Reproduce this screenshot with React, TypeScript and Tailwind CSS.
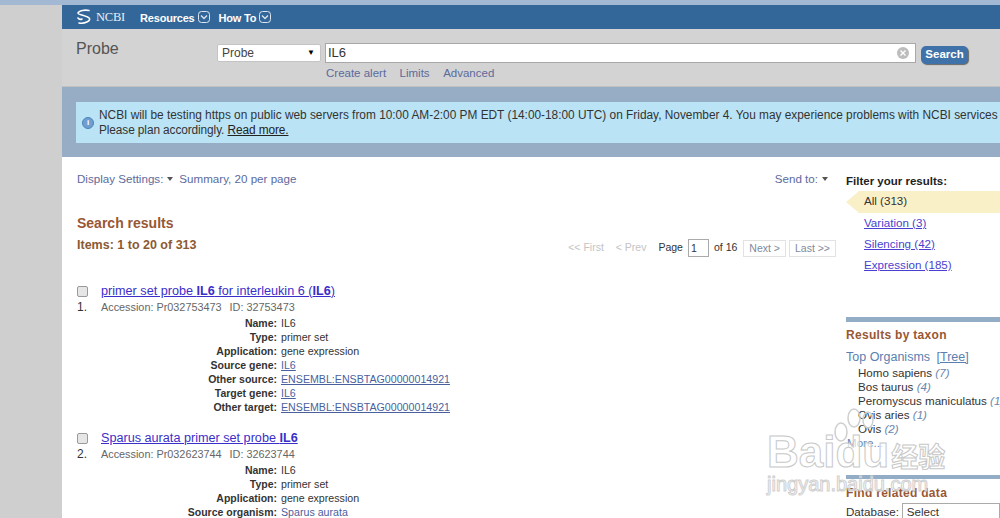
import React from 'react';

const firstRows = [
  { label: 'Name:', value: 'IL6' },
  { label: 'Type:', value: 'primer set' },
  { label: 'Application:', value: 'gene expression' },
  { label: 'Source gene:', value: 'IL6', link: true },
  { label: 'Other source:', value: 'ENSEMBL:ENSBTAG00000014921', link: true },
  { label: 'Target gene:', value: 'IL6', link: true },
  { label: 'Other target:', value: 'ENSEMBL:ENSBTAG00000014921', link: true },
];

const secondRows = [
  { label: 'Name:', value: 'IL6' },
  { label: 'Type:', value: 'primer set' },
  { label: 'Application:', value: 'gene expression' },
  { label: 'Source organism:', value: 'Sparus aurata', plainLink: true },
];

const organisms = [
  { name: 'Homo sapiens', count: '(7)' },
  { name: 'Bos taurus', count: '(4)' },
  { name: 'Peromyscus maniculatus', count: '(1)' },
  { name: 'Ovis aries', count: '(1)' },
  { name: 'Ovis', count: '(2)' },
];

type Row = { label: string; value: string; link?: boolean; plainLink?: boolean };

const Chevron = () => (
  <svg width="12" height="12" viewBox="0 0 12 12" fill="none" stroke="#dce6f0" strokeWidth="1">
    <rect x="0.5" y="0.5" width="11" height="11" rx="3" />
    <path d="M3 4.5 L6 7.5 L9 4.5" strokeWidth="1.3" />
  </svg>
);

const Logo = () => (
  <svg width="16" height="16" viewBox="0 0 16 16" fill="none" stroke="#ffffff" strokeWidth="1.6" strokeLinecap="round">
    <path d="M13 1.5 C9 0.5 3 1.5 2 4 C1.5 6 12 6.5 13.5 9.5 C14.5 12 9 15 3 14" />
    <path d="M2 9 C3 10.5 5 10.5 6 10" />
  </svg>
);

const Caret = () => <span className="inline-block w-0 h-0 border-x-[3.5px] border-x-transparent border-t-[4px] border-t-[#555]" />;

const Result = ({ num, title, accession, id, rows }: { num: string; title: React.ReactNode; accession: string; id: string; rows: Row[] }) => (
  <div className="flex">
    <div className="w-[24px] flex flex-col items-start">
      <input type="checkbox" className="w-[11px] h-[11px] mt-[3px] appearance-none rounded-[2px] border border-[#9a9a9a] bg-[#e6e6e6]" />
      <div className="mt-[3px] text-[12px] leading-[14px] text-[#333]">{num}</div>
    </div>
    <div className="flex-1">
      <div className="text-[12.65px] leading-[16px] text-[#3b2fc9] underline">{title}</div>
      <div className="mt-[1px] text-[10.85px] leading-[14px] text-[#666]">
        Accession: {accession}
        <span className="ml-[8px]">ID: {id}</span>
      </div>
      <div className="mt-[2px] grid grid-cols-[176px_1fr] gap-x-[4px] text-[10.5px] leading-[14px]">
        {rows.map((r) => (
          <React.Fragment key={r.label}>
            <div className="text-right font-bold text-[#333]">{r.label}</div>
            <div className={'text-[10.65px] ' + (r.link ? 'text-[#4a5f9e] underline' : r.plainLink ? 'text-[#4a5f9e]' : 'text-[#333]')}>{r.value}</div>
          </React.Fragment>
        ))}
      </div>
    </div>
  </div>
);

export default function App() {
  return (
    <div className="relative w-[1000px] h-[518px] overflow-hidden flex bg-white font-['Liberation_Sans',Arial,sans-serif]">
      <div className="w-[62px] shrink-0 bg-[#cfcfcf] border-t-[5px] border-t-[#a3b8d3]" />
      <div className="w-[938px] shrink-0 flex flex-col">
        <div className="h-[5px] shrink-0 bg-[#a3b8d3]" />
        <div className="h-[24px] shrink-0 bg-[#336699] flex items-center pl-[14px] text-white">
          <Logo />
          <span className="ml-[4px] text-[12.5px] font-['Liberation_Serif',serif] tracking-[-0.2px] text-[#e8eef5]">NCBI</span>
          <span className="ml-[15px] pt-[2px] text-[11px] font-bold tracking-[-0.2px]">Resources</span>
          <span className="ml-[3px]"><Chevron /></span>
          <span className="ml-[9px] pt-[2px] text-[11px] font-bold tracking-[-0.2px]">How To</span>
          <span className="ml-[3px]"><Chevron /></span>
        </div>
        <div className="h-[58px] shrink-0 bg-[#d3d3d3] border-b border-b-[#c0c0c0] flex pl-[14px]">
          <div className="w-[141px] pt-[10px] text-[16px] leading-[20px] text-[#555]">Probe</div>
          <div className="w-[704px]">
            <div className="mt-[14px] flex items-center">
              <div className="w-[104px] h-[18px] bg-white border border-[#c4c4c4] rounded-[2px] flex items-center justify-between pl-[4px] pr-[5px] text-[12px] text-[#444]">
                Probe
                <span className="text-[8px] text-black">▼</span>
              </div>
              <div className="ml-[4px] w-[591px] h-[20px] bg-white border border-[#a8a8a8] flex items-center justify-between pl-[2px] pr-[6px] text-[13px] text-[#333]">
                IL6
                <span className="w-[12px] h-[12px] rounded-full bg-[#bdbdbd] flex items-center justify-center">
                  <svg width="6" height="6" viewBox="0 0 6 6" stroke="#fff" strokeWidth="1.4"><path d="M0.5 0.5 L5.5 5.5 M5.5 0.5 L0.5 5.5" /></svg>
                </span>
              </div>
            </div>
            <div className="mt-[2px] ml-[109px] flex gap-[13.5px] text-[11.5px] leading-[16px] text-[#5c6a9c]">
              <span>Create alert</span>
              <span>Limits</span>
              <span>Advanced</span>
            </div>
          </div>
          <div className="mt-[17px] w-[47px] h-[18px] rounded-[5px] bg-[#3f72a8] shadow-[1px_1px_1px_#666] flex items-center justify-center text-[11.5px] font-bold text-white">Search</div>
        </div>
        <div className="h-[70px] shrink-0 bg-[#97acc5] pl-[14px] pt-[15px]">
          <div className="h-[41px] bg-[#bae3f6] flex items-center pl-[6px] whitespace-nowrap overflow-hidden">
            <span className="w-[12px] h-[12px] shrink-0 rounded-full bg-[#6f9fd0] border border-[#4e82b8] flex items-center justify-center text-[8px] font-bold text-white">i</span>
            <div className="ml-[5px] pt-[1px] text-[11.86px] leading-[15px] text-[#333]">
              <div>NCBI will be testing https on public web servers from 10:00 AM-2:00 PM EDT (14:00-18:00 UTC) on Friday, November 4. You may experience problems with NCBI services during</div>
              <div className="tracking-[-0.1px]">Please plan accordingly. <span className="underline text-[#222]">Read more.</span></div>
            </div>
          </div>
        </div>
        <div className="flex-1 flex min-h-0 border-l-[1px] border-l-white">
          <div className="w-[783px] shrink-0 pl-[14px] pr-[10px]">
            <div className="mt-[15px] flex justify-between items-center text-[11.6px] leading-[14px] text-[#5c6a9c] pr-[8px]">
              <div className="flex items-center">
                Display Settings:
                <span className="ml-[4px] mr-[6px] flex"><Caret /></span>
                Summary, 20 per page
              </div>
              <div className="flex items-center">
                Send to:
                <span className="ml-[4px] flex"><Caret /></span>
              </div>
            </div>
            <div className="mt-[28px] text-[14px] leading-[18px] font-bold text-[#985735]">Search results</div>
            <div className="flex items-start justify-between mt-[6px]">
              <div className="text-[12.5px] leading-[14px] font-bold text-[#8b5a32]">Items: 1 to 20 of 313</div>
              <div className="mt-[1px] flex items-center text-[10.5px] text-[#333]">
                <span className="text-[#c4c4c4]">&lt;&lt; First</span>
                <span className="ml-[12px] text-[#c4c4c4]">&lt; Prev</span>
                <span className="ml-[12px]">Page</span>
                <span className="ml-[5px] w-[21px] h-[18px] border border-[#aaa] pl-[2px] leading-[16px]">1</span>
                <span className="ml-[5px]">of 16</span>
                <span className="ml-[6px] h-[17px] px-[5px] border border-[#e2e2e2] text-[#7f8a9c] leading-[15px]">Next &gt;</span>
                <span className="ml-[3px] h-[17px] px-[5px] border border-[#e2e2e2] text-[#7f8a9c] leading-[15px]">Last &gt;&gt;</span>
              </div>
            </div>
            <div className="mt-[26px] flex flex-col gap-[16px]">
              <Result
                num="1."
                accession="Pr032753473"
                id="32753473"
                rows={firstRows}
                title={<>primer set probe <b>IL6</b> for interleukin 6 (<b>IL6</b>)</>}
              />
              <Result
                num="2."
                accession="Pr032623744"
                id="32623744"
                rows={secondRows}
                title={<>Sparus aurata primer set probe <b>IL6</b></>}
              />
            </div>
          </div>
          <div className="w-[154px] shrink-0 overflow-hidden whitespace-nowrap">
            <div className="mt-[17px] text-[11.5px] leading-[14px] font-bold text-[#222]">Filter your results:</div>
            <div className="mt-[3px] h-[22px] flex">
              <span className="w-0 h-0 border-y-[11px] border-y-transparent border-r-[13px] border-r-[#faf0c8]" />
              <span className="flex-1 bg-[#faf0c8] pl-[5px] text-[11.6px] leading-[19px] text-[#333]">All (313)</span>
            </div>
            <div className="ml-[18px] -mt-[1px] flex flex-col text-[11.6px] leading-[21px] text-[#4a3fd0] underline">
              <span>Variation (3)</span>
              <span>Silencing (42)</span>
              <span>Expression (185)</span>
            </div>
            <div className="mt-[42px] h-[5px] bg-[#94adc6]" />
            <div className="mt-[6px] text-[12px] leading-[14px] font-bold text-[#985735] tracking-[0.3px]">Results by taxon</div>
            <div className="mt-[7px] text-[12.5px] leading-[16px] text-[#5a7fb0]">
              Top Organisms <span className="ml-[3px] underline">[Tree]</span>
            </div>
            <div className="ml-[12px] mt-[1px] flex flex-col text-[11.6px] leading-[14px] text-[#333]">
              {organisms.map((o) => (
                <span key={o.name}>{o.name} <i className="text-[#6b86ad]">{o.count}</i></span>
              ))}
            </div>
            <div className="ml-[1px] text-[11.6px] leading-[14px] text-[#6b86ad]">More...</div>
            <div className="mt-[25px] h-[4px] bg-[#94adc6]" />
            <div className="mt-[7px] text-[12px] leading-[14px] font-bold text-[#985735] tracking-[0.3px]">Find related data</div>
            <div className="mt-[3px] flex items-center text-[11.6px] text-[#333]">
              Database:
              <span className="ml-[3px] flex-1 h-[18px] bg-white border border-[#aaa] pl-[4px] leading-[16px]">Select</span>
            </div>
          </div>
        </div>
      </div>
      {/* watermark over the page */}
      <svg className="absolute left-[826px] top-[408px]" width="62" height="64" viewBox="0 0 62 64" fill="none" stroke="#cfcfcf" strokeWidth="1.5">
        <ellipse cx="15" cy="24" rx="6" ry="9" />
        <ellipse cx="28" cy="10" rx="6" ry="9" />
        <ellipse cx="42" cy="12" rx="5" ry="8" />
      </svg>
      <div className="absolute left-[767px] top-[430px] text-[44px] leading-[44px] font-bold text-white/70 [-webkit-text-stroke:1px_#c8c8c8] whitespace-nowrap">Baidu<span className="text-[27px] ml-[2px] font-['Noto_Sans_CJK_SC',sans-serif]">经验</span></div>
      <div className="absolute left-[767px] top-[472px] text-[20px] leading-[24px] text-white/50 [-webkit-text-stroke:1px_#d0d0d0] whitespace-nowrap">jingyan.baidu.com</div>
    </div>
  );
}
